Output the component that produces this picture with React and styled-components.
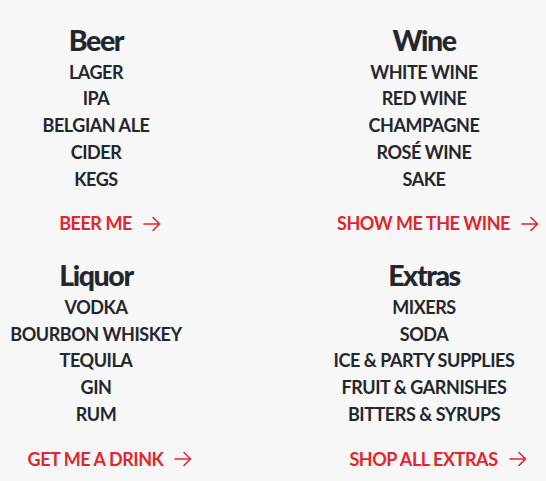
import React from "react";
import styled, { createGlobalStyle } from "styled-components";

const Global = createGlobalStyle`
  html, body { margin: 0; padding: 0; background: #f7f7f7; }
  body { font-family: Lato, "Open Sans", sans-serif; -webkit-font-smoothing: antialiased; }
`;

const Grid = styled.div`
  display: grid;
  grid-template-columns: 192px 192px;
  column-gap: 136px;
  row-gap: 21px;
  padding-top: 23px;
`;

const Column = styled.section`
  display: flex;
  flex-direction: column;
  align-items: center;
`;

const Heading = styled.h2`
  margin: 0 0 1.5px;
  font-size: 28.5px;
  line-height: 34px;
  font-weight: 900;
  color: #23272d;
  letter-spacing: -1.4px;
`;

const List = styled.ul`
  list-style: none;
  margin: 0;
  padding: 0;
  display: flex;
  flex-direction: column;
  align-items: center;
`;

const Item = styled.li`
  font-size: 18px;
  line-height: 26.75px;
  font-weight: 700;
  color: #23272d;
  white-space: nowrap;
  letter-spacing: -0.45px;
`;

const Cta = styled.a`
  margin-top: 18px;
  display: inline-flex;
  align-items: center;
  gap: 11px;
  padding-left: 28px;
  font-size: 18px;
  line-height: 27px;
  font-weight: 700;
  color: #e1262d;
  text-decoration: none;
  white-space: nowrap;
  letter-spacing: -0.45px;
`;

const Arrow = () => (
  <svg width="18" height="16" viewBox="0 0 18 16" fill="none" stroke="#e1262d" strokeWidth="1.6" strokeLinecap="round" strokeLinejoin="round">
    <path d="M1 8h15.5M10 1.5 16.5 8 10 14.5" />
  </svg>
);

const sections = [
  { title: "Beer", items: ["LAGER", "IPA", "BELGIAN ALE", "CIDER", "KEGS"], cta: "BEER ME" },
  { title: "Wine", items: ["WHITE WINE", "RED WINE", "CHAMPAGNE", "ROSÉ WINE", "SAKE"], cta: "SHOW ME THE WINE" },
  { title: "Liquor", items: ["VODKA", "BOURBON WHISKEY", "TEQUILA", "GIN", "RUM"], cta: "GET ME A DRINK" },
  { title: "Extras", items: ["MIXERS", "SODA", "ICE & PARTY SUPPLIES", "FRUIT & GARNISHES", "BITTERS & SYRUPS"], cta: "SHOP ALL EXTRAS" },
];

export default function App() {
  return (
    <>
      <Global />
      <Grid>
        {sections.map((s) => (
          <Column key={s.title}>
            <Heading>{s.title}</Heading>
            <List>
              {s.items.map((i) => (
                <Item key={i}>{i}</Item>
              ))}
            </List>
            <Cta href="#">
              {s.cta}
              <Arrow />
            </Cta>
          </Column>
        ))}
      </Grid>
    </>
  );
}
